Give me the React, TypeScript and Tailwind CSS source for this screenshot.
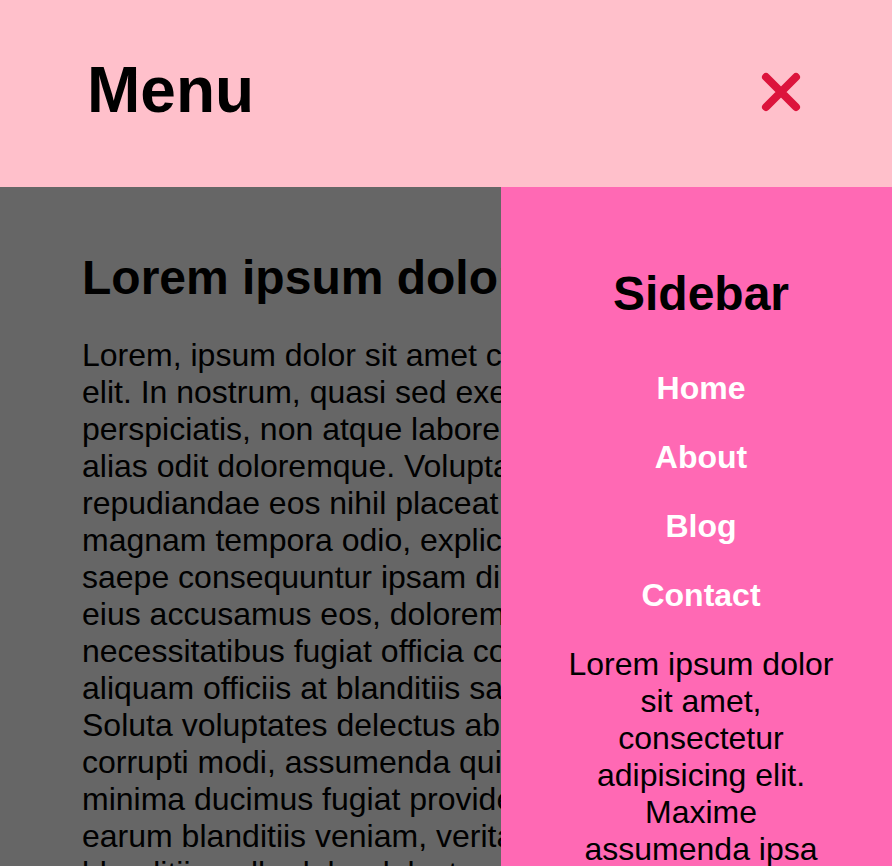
import React from 'react';

const links = ['Home', 'About', 'Blog', 'Contact'];

const article =
  'Lorem, ipsum dolor sit amet consectetur adipisicing elit. In nostrum, quasi sed exercitationem dolorum perspiciatis, non atque labore eveniet voluptatum alias odit doloremque. Voluptatem quod nisi unde repudiandae eos nihil placeat voluptas tenetur in, magnam tempora odio, explicabo ipsum dolore et saepe consequuntur ipsam dicta quidem harum eius accusamus eos, dolorem quae repellat fugit sit necessitatibus fugiat officia corporis nobis quas et, aliquam officiis at blanditiis sapiente numquam. Soluta voluptates delectus ab iusto quibusdam et corrupti modi, assumenda quis eveniet rerum quos minima ducimus fugiat provident tempore natus ut earum blanditiis veniam, veritatis quia dolorum iste blanditiis nulla dolor delectus sit dignitatis. Quam nemo aperiam.';

const sideText =
  'Lorem ipsum dolor sit amet, consectetur adipisicing elit. Maxime assumenda ipsa nesciunt quod, eaque fugiat.';

const CloseIcon: React.FC = () => (
  <svg width="40" height="40" viewBox="0 0 40 40" className="mt-[72px] shrink-0">
    <path d="M5 5 L35 35 M35 5 L5 35" stroke="#dc143c" strokeWidth="8" strokeLinecap="round" fill="none" />
  </svg>
);

const App: React.FC = () => {
  return (
    <div className="relative h-[866px] w-full overflow-hidden bg-white font-['Liberation_Sans',Arial,sans-serif] text-black">
      <header className="flex h-[187px] items-start justify-between bg-[#ffc0cb] pl-[87px] pr-[91px]">
        <h1 className="mt-[53px] text-[64px] font-bold leading-[normal]">Menu</h1>
        <CloseIcon />
      </header>

      <div className="relative h-[679px]">
        <main className="h-full bg-[#666666] pl-[82px] pr-[78px] pt-[63px]">
          <h1 className="text-[48px] font-bold leading-[normal]">Lorem ipsum dolor sit amet</h1>
          <p className="mt-[32px] text-[32px] leading-[normal]">{article}</p>
        </main>

        {/* sidebar sits over the article */}
        <aside className="absolute right-0 top-0 h-full w-[391px] bg-[#ff69b4] pl-[60px] pr-[51px] pt-[79px] text-center">
          <h2 className="mb-[49px] text-[48px] font-bold leading-[normal]">Sidebar</h2>
          <ul className="flex flex-col gap-[32px]">
            {links.map(l => (
              <li key={l} className="text-[32px] font-bold leading-[normal]">
                <a href="#" className="block text-white">
                  {l}
                </a>
              </li>
            ))}
          </ul>
          <p className="mt-[32px] text-[32px] leading-[normal]">{sideText}</p>
        </aside>
      </div>
    </div>
  );
};

export default App;
